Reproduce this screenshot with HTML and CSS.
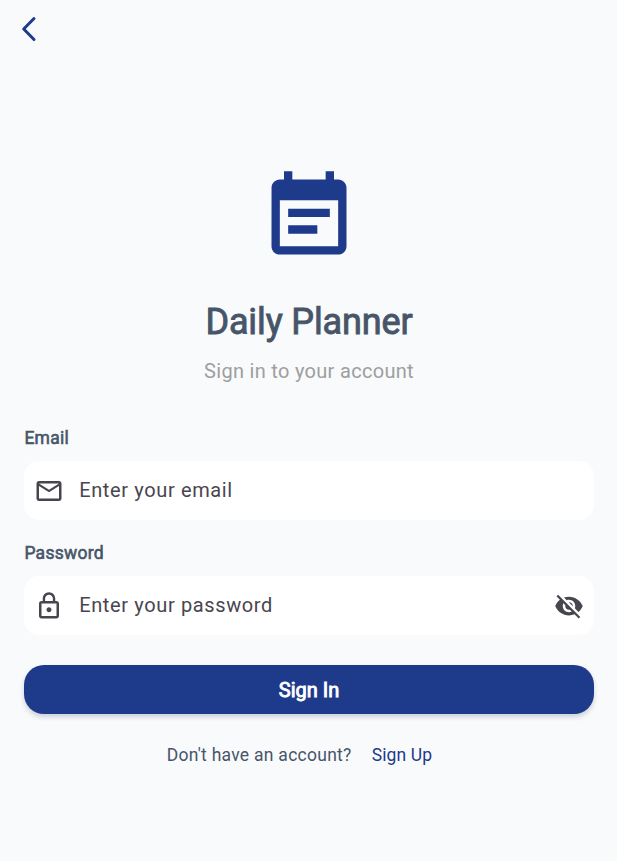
FILE: index.html
```html
<!DOCTYPE html>
<html lang="en">
<head>
<meta charset="utf-8">
<title>Daily Planner</title>
<link rel="stylesheet" href="styles.css">
</head>
<body>
<header class="bar">
<button class="back" aria-label="Back"><svg viewBox="0 0 30 30"><path d="M20 4.500 9.700 15 20 25.500"/></svg></button>
</header>
<main class="page">
<svg class="logo" viewBox="0 0 24 24"><path d="M17 10H7v2h10v-2zm2-7h-1V1h-2v2H8V1H6v2H5c-1.110 0-1.990.9-1.990 2L3 19c0 1.100.89 2 2 2h14c1.100 0 2-.9 2-2V5c0-1.100-.9-2-2-2zm0 16H5V8h14v11zm-5-5H7v2h7v-2z"/></svg>
<h1 class="title">Daily Planner</h1>
<p class="subtitle">Sign in to your account</p>
<form class="form">
<div class="label">Email</div>
<div class="field">
<svg viewBox="0 0 24 24"><path d="M22 6c0-1.100-.9-2-2-2H4c-1.100 0-2 .9-2 2v12c0 1.100.9 2 2 2h16c1.100 0 2-.9 2-2V6zm-2 0-8 5-8-5h16zm0 12H4V8l8 5 8-5v10z"/></svg>
<span class="hint">Enter your email</span>
</div>
<div class="label">Password</div>
<div class="field">
<svg viewBox="0 0 24 24"><path d="M12 17c1.100 0 2-.9 2-2s-.9-2-2-2-2 .9-2 2 .9 2 2 2zm6-9h-1V6c0-2.760-2.240-5-5-5S7 3.240 7 6v2H6c-1.100 0-2 .9-2 2v10c0 1.100.9 2 2 2h12c1.100 0 2-.9 2-2V10c0-1.100-.9-2-2-2zM8.900 6c0-1.710 1.390-3.100 3.100-3.100s3.100 1.390 3.100 3.100v2H8.900V6zM18 20H6V10h12v10z"/></svg>
<span class="hint">Enter your password</span>
<svg viewBox="0 0 24 24"><path d="M12 7c2.760 0 5 2.240 5 5 0 .65-.13 1.260-.36 1.830l2.920 2.920c1.510-1.260 2.700-2.890 3.430-4.750-1.730-4.390-6-7.500-11-7.500-1.400 0-2.740.25-3.980.7l2.160 2.160C10.740 7.130 11.350 7 12 7zM2 4.270l2.280 2.280.46.46C3.080 8.300 1.780 10.020 1 12c1.730 4.390 6 7.500 11 7.500 1.550 0 3.030-.3 4.380-.84l.42.42L19.730 22 21 20.730 3.270 3 2 4.270zM7.530 9.800l1.550 1.550c-.05.21-.08.43-.08.65 0 1.660 1.340 3 3 3 .22 0 .44-.03.65-.08l1.550 1.550c-.67.33-1.410.53-2.200.53-2.760 0-5-2.240-5-5 0-.79.2-1.530.53-2.200zm4.310-.78 3.150 3.150.02-.16c0-1.660-1.340-3-3-3l-.17.01z"/></svg>
</div>
<button class="submit" type="button">Sign In</button>
</form>
<div class="signup"><span>Don't have an account?</span><a>Sign Up</a></div>
</main>
</body>
</html>
```

FILE: styles.css
```css
* { box-sizing: border-box; }
body { margin: 0; height: 861px; overflow: hidden; background: #f9fafc; color: #475569; font-family: Roboto, sans-serif; }
button { border: 0; padding: 0; background: none; font: inherit; }
svg { display: block; fill: currentColor; flex: none; }
.bar { height: 58px; padding: 14px; }
.back { display: block; color: #1e3a8a; }
.back svg { width: 30px; height: 30px; fill: none; stroke: currentColor; stroke-width: 3; stroke-linecap: round; stroke-linejoin: round; }
.page { padding: 109px 23px 0 24px; }
.logo { width: 100px; height: 100px; margin: 0 auto; color: #1e3a8a; }
.title { margin: 33px 0 0; font-size: 36px; line-height: 44px; font-weight: 400; letter-spacing: -.12px; text-align: center; -webkit-text-stroke: .9px currentColor; }
.subtitle { margin: 13px 0 0; font-size: 20px; line-height: 28px; letter-spacing: .3px; text-align: center; color: #9e9e9e; }
.form { margin-top: 43px; }
.label { padding-left: .4px; font-size: 17.500px; line-height: 20px; letter-spacing: .27px; -webkit-text-stroke: .6px currentColor; }
.field { display: flex; align-items: center; height: 59px; margin: 13px 0 23px; padding: 0 10px; border-radius: 15px; background: #fff; color: #49454f; }
.field svg { width: 30px; height: 30px; margin-top: 1px; }
.hint { flex: 1; margin: -1px 0 0 15.200px; font-size: 20px; letter-spacing: .63px; }
.submit { display: block; width: 100%; height: 49px; margin-top: 30px; border-radius: 20px; background: #1e3a8a; color: #fff; font-size: 20px; -webkit-text-stroke: .9px currentColor; box-shadow: 0 3px 5px rgba(30,41,80,.2); }
.signup { display: flex; justify-content: center; gap: 20px; margin: 30px 19px 0 0; font-size: 17.500px; line-height: 22px; letter-spacing: .27px; }
.signup a { color: #1e3a8a; letter-spacing: .15px; }
```
